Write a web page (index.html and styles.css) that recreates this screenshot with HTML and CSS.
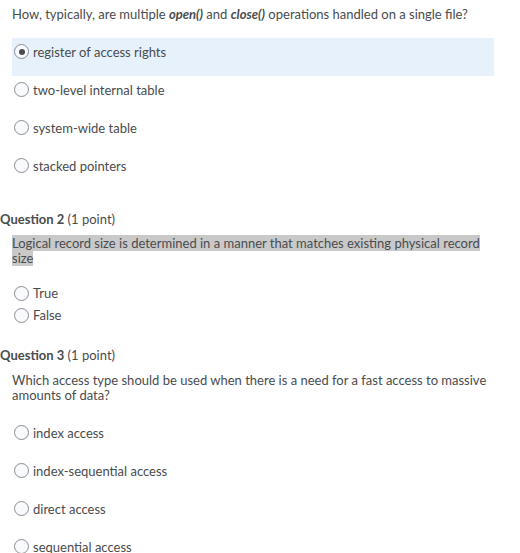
FILE: index.html
```html
<!DOCTYPE html>
<html lang="en">
<head>
  <meta charset="UTF-8">
  <title>Quiz</title>
  <link rel="stylesheet" href="styles.css">
</head>
<body>
  <div class="question first">
    <p class="q-text">How, typically, are multiple <strong><em>open()</em></strong> and <strong><em>close()</em></strong> operations handled on a single file?</p>
    <div class="options spaced">
      <label class="option selected"><span class="radio checked"></span>register of access rights</label>
      <label class="option"><span class="radio"></span>two-level internal table</label>
      <label class="option"><span class="radio"></span>system-wide table</label>
      <label class="option"><span class="radio"></span>stacked pointers</label>
    </div>
  </div>

  <div class="question q2">
    <h3 class="q-title"><strong>Question 2</strong> (1 point)</h3>
    <p class="q-text"><span class="marked">Logical record size is determined in a manner that matches existing physical record size</span></p>
    <div class="options compact">
      <label class="option"><span class="radio"></span>True</label>
      <label class="option"><span class="radio"></span>False</label>
    </div>
  </div>

  <div class="question q3">
    <h3 class="q-title"><strong>Question 3</strong> (1 point)</h3>
    <p class="q-text">Which access type should be used when there is a need for a fast access to massive amounts of data?</p>
    <div class="options spaced">
      <label class="option"><span class="radio"></span>index access</label>
      <label class="option"><span class="radio"></span>index-sequential access</label>
      <label class="option"><span class="radio"></span>direct access</label>
      <label class="option"><span class="radio"></span>sequential access</label>
    </div>
  </div>
</body>
</html>
```

FILE: styles.css
```css
body {
  font-family: Lato, "Open Sans", sans-serif;
  font-size: 13px;
  color: #494c4e;
  background-color: #ffffff;
  margin: 0;
  padding: 0;
}

.question {
  width: 494px;
}

.first {
  padding-top: 7px;
}

.q-text {
  margin: 0;
  padding-left: 12px;
  line-height: 15px;
}

.q-title {
  margin: 0;
  font-size: 13px;
  font-weight: normal;
  line-height: 15px;
}

.q-title strong {
  font-weight: bold;
}

.q2 {
  margin-top: 22px;
}

.q3 {
  margin-top: 22px;
}

.q2 .q-text,
.q3 .q-text {
  margin-top: 9px;
}

.q3 .q-text {
  margin-top: 10px;
}

.marked {
  background-color: #c9c9c9;
}

.options {
  display: flex;
  flex-direction: column;
}

.options.spaced {
  margin-top: 16px;
}

.options.compact {
  margin-top: 16px;
}

.option {
  display: flex;
  align-items: center;
  gap: 4px;
  margin-left: 12px;
  padding-left: 2px;
  line-height: 16px;
}

.spaced .option {
  height: 38px;
  align-items: flex-start;
  padding-top: 6px;
  box-sizing: border-box;
}

.compact .option {
  height: 22px;
}

.option.selected {
  background-color: #e6f1fb;
}

.radio {
  width: 13px;
  height: 13px;
  border: 1px solid #8a8d90;
  border-radius: 50%;
  background-color: #f8fafd;
  flex-shrink: 0;
  position: relative;
}

.radio.checked::after {
  content: "";
  position: absolute;
  top: 3.5px;
  left: 3.5px;
  width: 6px;
  height: 6px;
  border-radius: 50%;
  background-color: #494c4e;
}
```
